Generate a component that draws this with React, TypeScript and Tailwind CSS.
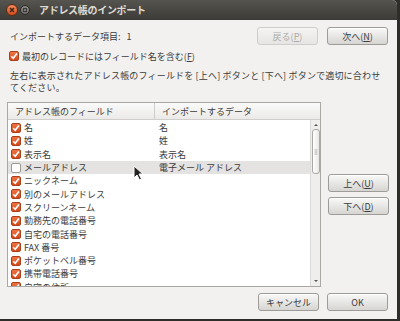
import React from 'react';

type Row = { field: string; data: string; checked: boolean };

const rows: Row[] = [
  { field: '名', data: '名', checked: true },
  { field: '姓', data: '姓', checked: true },
  { field: '表示名', data: '表示名', checked: true },
  { field: 'メールアドレス', data: '電子メール アドレス', checked: false },
  { field: 'ニックネーム', data: '', checked: true },
  { field: '別のメールアドレス', data: '', checked: true },
  { field: 'スクリーンネーム', data: '', checked: true },
  { field: '勤務先の電話番号', data: '', checked: true },
  { field: '自宅の電話番号', data: '', checked: true },
  { field: 'FAX 番号', data: '', checked: true },
  { field: 'ポケットベル番号', data: '', checked: true },
  { field: '携帯電話番号', data: '', checked: true },
  { field: '自宅の住所', data: '', checked: true },
];

const CheckBox: React.FC<{ checked: boolean }> = ({ checked }) =>
  checked ? (
    <span className="flex h-[10px] w-[10px] shrink-0 items-center justify-center rounded-[2px] border border-[#a8401b] bg-gradient-to-b from-[#ef7442] to-[#d24a1c]">
      <svg width="8" height="8" viewBox="0 0 8 8">
        <path d="M1.2 4.2 L3.2 6.2 L6.9 1.4" fill="none" stroke="#fff" strokeWidth="1.6" />
      </svg>
    </span>
  ) : (
    <span className="h-[10px] w-[10px] shrink-0 rounded-[2px] border border-[#9a9996] bg-white" />
  );

const Button: React.FC<{ children: React.ReactNode; disabled?: boolean }> = ({ children, disabled }) => (
  <div
    className={
      disabled
        ? 'flex h-[18px] w-[61px] items-center justify-center rounded-[3px] border border-[#cfcecc] bg-gradient-to-b from-[#f5f4f3] to-[#e6e5e3] text-[#adaca9]'
        : 'flex h-[18px] w-[61px] items-center justify-center rounded-[3px] border border-[#9d9c99] bg-gradient-to-b from-[#f9f9f8] to-[#d6d5d2] text-[#3c3c3c] shadow-[inset_0_1px_0_#ffffff]'
    }
  >
    {children}
  </div>
);

const Mn: React.FC<{ k: string }> = ({ k }) => (
  <span>
    (<span className="underline underline-offset-1">{k}</span>)
  </span>
);

export default function App() {
  return (
    <div className="h-[321px] w-[400px] overflow-hidden bg-[#2e2d2a] font-['Noto_Sans_CJK_JP','Noto_Sans',sans-serif] text-[9px] leading-none text-[#3c3c3c]">
      <div className="relative flex h-[319px] w-[397px] flex-col overflow-hidden rounded-tr-[5px] bg-[#f2f1f0]">
        {/* title bar */}
        <div className="flex h-[20px] shrink-0 items-center bg-gradient-to-b from-[#55544f] to-[#3c3b37] pl-[6px]">
          <span className="flex h-[12px] w-[12px] items-center justify-center rounded-full border border-[#5a2a12] bg-gradient-to-b from-[#f58a5a] to-[#d54b1b]">
            <svg width="6" height="6" viewBox="0 0 6 6">
              <path d="M1 1 L5 5 M5 1 L1 5" stroke="#3a2418" strokeWidth="1.4" />
            </svg>
          </span>
          <span className="ml-[2px] flex h-[10px] w-[10px] items-center justify-center rounded-full border border-[#2c2b28] bg-gradient-to-b from-[#8d8c87] to-[#6a6964]">
            <span className="h-[4px] w-[4px] border border-[#3c3b37]" />
          </span>
          <span className="ml-[9px] text-[10px] font-bold tracking-[-0.3px] text-[#dfdbd2]">アドレス帳のインポート</span>
        </div>

        {/* top row */}
        <div className="mt-[7px] flex items-center justify-between pl-[10px] pr-[9px]">
          <span>インポートするデータ項目:&nbsp;&nbsp;&nbsp;1</span>
          <div className="flex gap-[9px]">
            <Button disabled>
              戻る<Mn k="P" />
            </Button>
            <Button>
              次へ<Mn k="N" />
            </Button>
          </div>
        </div>

        {/* checkbox */}
        <div className="mt-[6px] flex items-center gap-[3px] pl-[9px]">
          <CheckBox checked />
          <span>
            最初のレコードにはフィールド名を含む<Mn k="F" />
          </span>
        </div>

        {/* description */}
        <p className="mt-[9px] w-[388px] pl-[10px] leading-[12px] tracking-[0.18px]">
          左右に表示されたアドレス帳のフィールドを [上へ] ボタンと [下へ] ボタンで適切に合わせてください。
        </p>

        {/* list + side buttons */}
        <div className="mt-[8px] flex pl-[7px]">
          <div className="flex h-[185px] w-[314px] flex-col overflow-hidden border border-[#a8a7a4] bg-white">
            <div className="flex h-[17px] shrink-0 border-b border-[#cfcecb] bg-gradient-to-b from-[#fafafa] to-[#ebeae8]">
              <div className="flex w-[147px] items-center border-r border-[#cfcecb] pl-[7px]">アドレス帳のフィールド</div>
              <div className="flex items-center pl-[7px]">インポートするデータ</div>
            </div>
            <div className="flex min-h-0 flex-1">
              <div className="flex-1 overflow-hidden pt-[1px]">
                {rows.map((r) => (
                  <div
                    key={r.field}
                    className={`flex h-[13.3px] items-center ${r.checked ? '' : 'bg-[#e4e3e1]'}`}
                  >
                    <div className="flex w-[147px] items-center gap-[3px] pl-[3px]">
                      <CheckBox checked={r.checked} />
                      <span>{r.field}</span>
                    </div>
                    <div className="pl-[4px]">{r.data}</div>
                  </div>
                ))}
              </div>
              {/* scrollbar */}
              <div className="flex w-[10px] flex-col items-center border-l border-[#dddcda] bg-[#efeeec] pt-[1px]">
                <svg width="6" height="6" viewBox="0 0 6 6" className="mt-[1px]">
                  <path d="M1 4 L3 2 L5 4 Z" fill="#555" />
                </svg>
                <div className="mt-[1px] flex h-[45px] w-[8px] items-center justify-center rounded-[3px] border border-[#a9a8a5] bg-gradient-to-r from-[#ffffff] to-[#e9e8e6]">
                  <svg width="4" height="6" viewBox="0 0 4 6">
                    <path d="M0.5 1 H3.5 M0.5 3 H3.5 M0.5 5 H3.5" stroke="#b5b4b1" strokeWidth="1" />
                  </svg>
                </div>
                <div className="flex-1" />
                <svg width="6" height="6" viewBox="0 0 6 6" className="mb-[2px]">
                  <path d="M1 2 L3 4 L5 2 Z" fill="#555" />
                </svg>
              </div>
            </div>
          </div>
          <div className="ml-[7px] flex flex-col gap-[5px] pt-[72px]">
            <Button>
              上へ<Mn k="U" />
            </Button>
            <Button>
              下へ<Mn k="D" />
            </Button>
          </div>
        </div>

        {/* bottom buttons */}
        <div className="mt-[6px] flex justify-end gap-[8px] pr-[9px]">
          <Button>キャンセル</Button>
          <Button>OK</Button>
        </div>

        {/* mouse pointer */}
        <svg width="11" height="16" viewBox="0 0 11 16" className="absolute left-[133px] top-[165px]">
          <path d="M1 1 L1 13 L4 10 L6.5 15 L8.5 14 L6 9 L10 9 Z" fill="#222" stroke="#fff" strokeWidth="1" strokeLinejoin="round" />
        </svg>
      </div>
    </div>
  );
}
